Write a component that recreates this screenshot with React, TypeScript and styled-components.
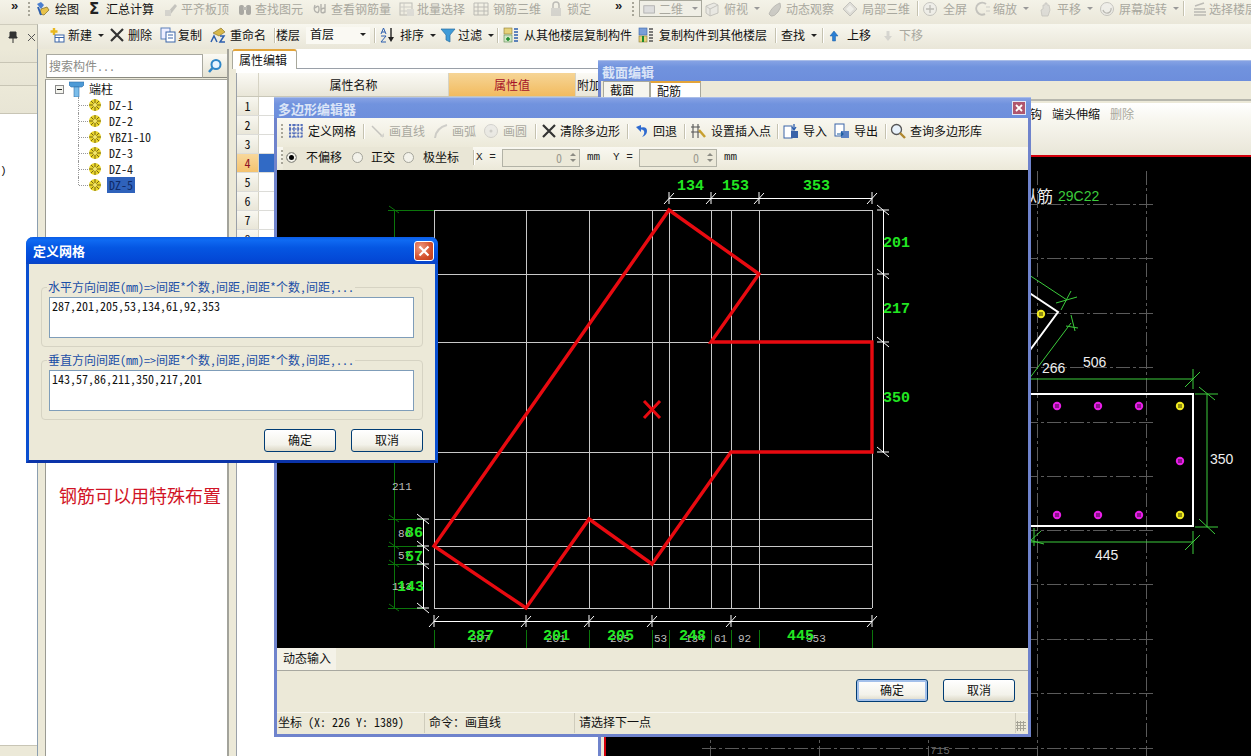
import React from "react";
import styled, { createGlobalStyle } from "styled-components";

const Global = createGlobalStyle`
  html, body { margin: 0; padding: 0; background: #ece9d8; }
  body { font: 12px/14px "Noto Sans CJK SC", "Liberation Sans", sans-serif; font-feature-settings: "hwid"; color: #111; }
  * { box-sizing: border-box; }
`;

const Root = styled.div`
  position: relative; width: 1251px; height: 756px; overflow: hidden;
  display: flex; flex-direction: column; background: #ece9d8;
`;
const TopBar = styled.div`
  flex: 0 0 24px; display: flex; align-items: flex-start; padding-top: 0;
  background: linear-gradient(#f4f3e8, #eae7d9);
`;
const SecondBar = styled.div`
  flex: 0 0 25px; display: flex; align-items: center; padding-bottom: 3px;
  background: linear-gradient(#f8f7ef, #e9e6d8);
`;
const Spacer = styled.div<{ $w: number }>`flex: 0 0 ${p => p.$w}px;`;
const Slot = styled.div<{ $w: number; $h?: number; $dim?: boolean }>`
  flex: 0 0 ${p => p.$w}px; height: ${p => p.$h ?? 17}px; display: flex; align-items: center;
  white-space: nowrap; overflow: hidden; color: ${p => (p.$dim ? "#a9a89f" : "#111")};
`;
const IconBox = styled.span<{ $w: number; $dim?: boolean }>`
  flex: 0 0 ${p => p.$w}px; display: flex; align-items: center; height: 16px;
  ${p => (p.$dim ? "filter: grayscale(1); opacity: .5;" : "")}
`;
const Caret = styled.span<{ $dim?: boolean }>`
  width: 0; height: 0; margin-left: 6px; border: 3px solid transparent; border-bottom: 0;
  border-top: 3px solid ${p => (p.$dim ? "#999" : "#222")};
`;
const Sep = styled.span`width: 1px; height: 15px; background: #c5c2b0; box-shadow: 1px 0 0 #fff;`;
const Grip = styled.span`
  flex: none; width: 2px; height: 14px;
  background: repeating-linear-gradient(#a8a699 0 2px, transparent 2px 4px);
`;
const Chevron = styled.span`font: bold 13px/12px "Liberation Sans", sans-serif; color: #222; margin-bottom: 6px;`;
const SigmaMark = styled.span`font: bold 15px/16px "DejaVu Sans", sans-serif; color: #222;`;
const ViewCombo = styled.div`
  flex: 0 0 60px; height: 17px; margin: 0 5px 0 0; display: flex; align-items: center; gap: 3px;
  padding: 0 3px; border: 1px solid #a8a89c; background: #f0efe6; color: #a9a89f;
`;
const FloorCombo = styled.div`
  flex: 0 0 64px; height: 19px; display: flex; align-items: center; justify-content: space-between;
  padding: 0 4px 2px 4px; background: #faf9f3; margin-right: 4px;
`;
const PinBox = styled.div`
  flex: 0 0 38px; height: 25px; margin-bottom: -3px; display: flex; align-items: center; padding-left: 8px; gap: 9px;
  border-right: 1px solid #b3b3a8; border-top: 1px solid #cfccbd; background: #ece9d8;
`;

const Body = styled.div`flex: 1; display: flex; min-height: 0;`;
const FarLeft = styled.aside`
  flex: 0 0 38px; display: flex; flex-direction: column; border-right: 1px solid #8b9eb0;
`;
const FarBand = styled.div<{ $h: number }>`
  flex: 0 0 ${p => p.$h}px; border-bottom: 1px solid #c8c5b5; background: linear-gradient(#ece9d8, #e8e5d5);
`;
const FarContent = styled.div`
  flex: 1; background: #fff; padding: 50px 0 0 0; font-family: "Liberation Mono", monospace; font-size: 11px;
`;
const FarFoot = styled.div`flex: 0 0 11px; background: #ece9d8; border-top: 1px solid #c8c5b5;`;
const Gutter = styled.div<{ $w: number }>`flex: 0 0 ${p => p.$w}px;`;

const TreePanel = styled.section`
  flex: 0 0 184px; display: flex; flex-direction: column; padding-top: 5px; border-right: 2px solid #a3a39b;
`;
const SearchRow = styled.div`
  flex: 0 0 24px; display: flex; margin-left: 1px; margin-right: 0;
`;
const SearchField = styled.div`
  flex: 0 0 157px; border: 1px solid #a9a9a0; border-bottom-color: #8a8a80; background: #fff;
  color: #8b8b86; padding: 3px 2px; line-height: 15px;
`;
const SearchBtn = styled.div`
  flex: 1; display: flex; align-items: center; justify-content: center;
  background: linear-gradient(#fbfaf4, #e6e3d3); border-bottom: 1px solid #8a8a80;
`;
const TreeBox = styled.div`
  flex: 1; margin-top: 1px; background: #fff; border-left: 1px solid #9a9a92; border-top: 1px solid #a5a59c; padding-top: 1px;
`;
const RootRow = styled.div`display: flex; align-items: center; height: 16px; padding-left: 9px;`;
const MinusBox = styled.span`
  width: 9px; height: 9px; border: 1px solid #8b8b8b; margin-right: 5px; position: relative; background: #f4f4ee;
  &::after { content: ""; position: absolute; left: 1px; right: 1px; top: 3px; height: 1px; background: #222; }
`;
const ChildRow = styled.div`display: flex; align-items: center; height: 16px; padding-left: 32px;`;
const Branch = styled.span<{ $last?: boolean }>`
  position: relative; width: 10px; height: 16px; flex: none;
  border-left: 1px dotted #999; ${p => (p.$last ? "height: 8px; align-self: flex-start;" : "")}
  &::after { content: ""; position: absolute; left: 0; right: 0; top: 8px; border-top: 1px dotted #999; }
`;
const NodeLabel = styled.span<{ $selected?: boolean }>`
  margin-left: 5px; padding: 0 2px; height: 16px; line-height: 16px;
  background: ${p => (p.$selected ? "#2f62bb" : "transparent")};
  color: ${p => (p.$selected ? "#0f2a68" : "#222")};
`;
const RedNote = styled.div`
  margin: 290px 0 0 13px; font-size: 18px; line-height: 24px; color: #d11426; white-space: nowrap;
`;

const PropPanel = styled.section`flex: 1; display: flex; flex-direction: column; min-width: 0; background: #fff;`;
const TabStrip = styled.div`flex: 0 0 20px; display: flex; border-bottom: 1px solid #9aa0a8; background: #fff; margin-top: 0;`;
const PropTab = styled.div`
  width: 65px; height: 20px; padding: 2px 0 0 6px; background: #fff; border: 1px solid #a8a89c;
  border-top: 2px solid #e3a43a; border-bottom: 0; border-radius: 3px 3px 0 0; margin-bottom: -1px;
`;
const GridWrap = styled.div`flex: 1; padding: 4px 0 0 4px; background: linear-gradient(90deg, #ece9d8 0 4px, #fff 4px); `;
const Grid = styled.div`border-left: 1px solid #9aa0a8; height: 100%; background: #fff;`;
const GridHead = styled.div`display: flex; height: 24px; border-bottom: 1px solid #c9c7b8;`;
const HeadCell = styled.div<{ $w: number; $on?: boolean; $start?: boolean }>`
  flex: 0 0 ${p => p.$w}px; display: flex; align-items: center; justify-content: ${p => (p.$start ? "flex-start" : "center")};
  padding-left: ${p => (p.$start ? 1 : 0)}px;
  border-right: 1px solid #d6d3c4; white-space: nowrap; overflow: hidden;
  background: ${p => (p.$on ? "linear-gradient(#f6d596, #f2bb5f)" : "linear-gradient(#fbfaf5, #e9e6d8)")};
  color: ${p => (p.$on ? "#a5122a" : "#111")};
`;
const GridRow = styled.div`display: flex; height: 19px; border-bottom: 1px solid #dcdcd8;`;
const RowNo = styled.div<{ $on?: boolean }>`
  flex: 0 0 22px; text-align: center; line-height: 18px;
  background: ${p => (p.$on ? "linear-gradient(#f8d89c, #f4c36f)" : "linear-gradient(#f8f7f0, #e9e6d8)")};
  color: ${p => (p.$on ? "#8e1025" : "#111")}; border-right: 1px solid #d6d3c4;
`;
const RowCell = styled.div<{ $on?: boolean }>`flex: 1; background: ${p => (p.$on ? "#316ac5" : "#fff")};`;

const Win = styled.div<{ $l: number; $t: number; $w: number; $h: number }>`
  position: absolute; left: ${p => p.$l}px; top: ${p => p.$t}px; width: ${p => p.$w}px; height: ${p => p.$h}px;
  display: flex; flex-direction: column; background: #ece9d8; border: 3px solid #6f83cc; border-top: 0;
`;
const WinTitle = styled.div`
  flex: 0 0 21px; display: flex; align-items: center; justify-content: space-between;
  margin: 0 -3px; padding: 1px 5px 0 4px;
  background: linear-gradient(#86a2e4, #7193de 30%, #6d8edc); border-top: 1px solid #a9bde8;
  color: #dbe5f7; font-weight: 700; font-size: 13px;
`;
const SmallClose = styled.span`
  width: 14px; height: 14px; display: flex; align-items: center; justify-content: center;
  background: #b0566e; border: 1px solid #e4e8f6; color: #fff; margin-top: -1px;
`;
const SectionTabs = styled.div`flex: 0 0 19px; display: flex; align-items: flex-end; padding-left: 2px; border-bottom: 2px solid #b7b7ad;`;
const SecTab = styled.div<{ $w: number; $on?: boolean }>`
  width: ${p => p.$w}px; height: 18px; padding: 1px 0 0 6px; background: ${p => (p.$on ? "#fff" : "#f6f5ee")};
  border: 1px solid #a8a89c; border-bottom: 0;
  ${p => (p.$on ? "border-top: 2px solid #e3a43a;" : "")}
`;
const SecTools = styled.div`
  flex: 0 0 52px; display: flex; gap: 10px; padding: 4px 0 0 417px; margin-top: 2px; white-space: nowrap;
  background: linear-gradient(#fff 0, #f8f7f0 30%, #e9e6d8);
`;
const MutedTool = styled.span`color: #aaa99f;`;
const RedRule = styled.div`flex: 0 0 2px; background: #d4000c;`;
const SectionCanvas = styled.div`flex: 1; margin-left: 3px; border-left: 2px solid #d4000c; background: #000; min-height: 0;`;
const DrawSvg = styled.svg`display: block;`;

const PolyRow = styled.div<{ $h: number }>`
  flex: 0 0 ${p => p.$h}px; display: flex; align-items: center; padding-bottom: 3px;
  background: linear-gradient(#f9f8f1, #ece9d9);
`;
const ModeGroup = styled.div`
  display: flex; align-items: center; align-self: stretch; background: #e9e6d6; flex: 0 0 190px; padding-left: 3px; margin-bottom: -3px; padding-bottom: 3px;
`;
const Radio = styled.span<{ $on?: boolean }>`
  flex: none; width: 11px; height: 11px; border-radius: 50%; border: 1px solid #a4a49a; background: ${p => (p.$on ? "#000" : "#f3f2ea")};
  ${p => (p.$on ? "box-shadow: inset 0 0 0 2px #f5f4ec;" : "")}
`;
const ModeLabel = styled.span<{ $ml: number; $mr: number }>`margin: 0 ${p => p.$mr}px 0 ${p => p.$ml}px; white-space: nowrap;`;
const MonoLabel = styled.span<{ $w: number }>`
  flex: 0 0 ${p => p.$w}px; white-space: pre; font: 11px/14px "Liberation Mono", monospace; color: #222;
`;
const SpinBox = styled.div`
  flex: 0 0 78px; height: 18px; display: flex; align-items: center; justify-content: flex-end; gap: 6px; padding-right: 2px;
  border: 1px solid #b2b2a6; background: #ece9d9; color: #9c9b90; margin-bottom: -1px;
`;
const SpinArrows = styled.span`
  display: flex; flex-direction: column; gap: 3px; width: 9px; align-items: center;
  &::before, &::after { content: ""; width: 0; height: 0; border: 3px solid transparent; }
  &::before { border-top: 0; border-bottom: 3px solid #8c8c84; }
  &::after { border-bottom: 0; border-top: 3px solid #8c8c84; }
`;
const PolyCanvas = styled.div`flex: 0 0 478px; background: #000;`;
const DynTabs = styled.div`flex: 0 0 23px; display: flex; border-bottom: 1px solid #a8a8a0; margin-bottom: 0;`;
const DynTab = styled.div`width: 59px; padding: 3px 0 0 6px; background: #f4f2e8;`;
const BtnRow = styled.div`flex: 0 0 41px; display: flex; justify-content: flex-end; gap: 15px; padding: 8px 13px 0 0;`;
const XpButton = styled.button<{ $focus?: boolean }>`
  width: 72px; height: 23px; padding: 0 0 1px; font: inherit; color: #111; border: 1px solid #003c74; border-radius: 3px;
  background: linear-gradient(#fff, #f3f2ea 70%, #dcd8c6);
  ${p => (p.$focus ? "box-shadow: inset 0 0 0 2px #a3c0ea;" : "")}
`;
const StatusBar = styled.div`flex: 0 0 21px; display: flex; align-items: center; border-top: 1px solid #f8f7f0; white-space: pre;`;
const StatusCell = styled.div<{ $w?: number; $pl: number }>`
  ${p => (p.$w ? `flex: 0 0 ${p.$w}px;` : "flex: 1;")} height: 100%; padding: 2px 0 0 ${p => p.$pl}px; border-right: 1px solid #cfccbc;
`;
const ResizeGrip = styled.span`
  flex: 0 0 10px; height: 10px; align-self: flex-end; margin: 0 2px 2px 0;
  background: radial-gradient(#a5a396 1px, transparent 1.2px) 0 0 / 3px 3px;
`;

const Dialog = styled.div`
  position: absolute; left: 26px; top: 237px; width: 412px; height: 226px; display: flex; flex-direction: column;
  background: #ece9d8; border: 3px solid #0a4fd0; border-top: 0; border-bottom-color: #0a33a8; border-radius: 7px 7px 0 0;
`;
const DlgTitle = styled.div`
  flex: 0 0 27px; margin: 0 -3px; padding: 0 4px 0 7px; display: flex; align-items: center; justify-content: space-between;
  border-radius: 7px 7px 0 0; color: #fff; font-weight: 700; font-size: 13px;
  background: linear-gradient(#0a5ce6, #0f6af2 12%, #0556e2 40%, #0348d6 85%, #0a44c4);
`;
const DlgClose = styled.span`
  width: 20px; height: 20px; display: flex; align-items: center; justify-content: center;
  background: radial-gradient(circle at 30% 30%, #ee9a80, #d4502c 60%, #bd3c1a); border: 1px solid #fff; border-radius: 3px;
`;
const DlgBody = styled.div`flex: 1; padding: 15px 12px 0 12px; display: flex; flex-direction: column;`;
const Group = styled.fieldset`
  margin: 0 0 5px; padding: 0 8px 8px 7px; border: 1px solid #d6d3c3; border-radius: 4px; min-width: 0;
`;
const GroupLegend = styled.legend`
  padding: 0 1px; margin-left: -2px; height: 16px; line-height: 16px; color: #1b4ea6; white-space: nowrap;
`;
const GridInput = styled.textarea`
  display: block; width: 100%; height: 41px; margin-top: 2px; padding: 1px 2px; resize: none; outline: 0; overflow: hidden;
  border: 1px solid #7f9db9; background: #fff; font: inherit; font-feature-settings: "hwid"; color: #111;
`;
const DlgButtons = styled.div`display: flex; justify-content: flex-end; gap: 15px; margin-top: 4px;`;

const GreenNum = styled.text`fill: #22e622; font: bold 15px "Liberation Mono", monospace;`;
const GreyNum = styled.text`fill: #bdbdbd; font: 11px "Liberation Mono", monospace;`;
const WhiteNum = styled.text`fill: #eee; font: 14px "Liberation Sans", sans-serif;`;
const GreenCode = styled.text`fill: #3ccc3c; font: 14px "Liberation Sans", sans-serif;`;
const WhiteCjk = styled.text`fill: #eee; font: 16px "Noto Sans CJK SC", sans-serif;`;
const GreyTick = styled.text`fill: #666; font: 11px "Liberation Mono", monospace;`;

type IconName = string;
const Ic = ({ n }: { n: IconName }) => {
  const s = (c: React.ReactNode, w = 16) => <svg width={w} height={16} viewBox="0 0 16 16">{c}</svg>;
  switch (n) {
    case "draw": return s(<><path d="M2 3l4-2 3 3-3 4z" fill="#4a7fd0" /><path d="M6 8l6-2 2 3-5 5-4-1z" fill="#e8c24a" stroke="#7a6a2a" strokeWidth=".7" /><path d="M3 6l3 8" stroke="#2d5fae" strokeWidth="2" /></>);
    case "align": return s(<><path d="M3 13L12 3l2 2-7 9z" fill="#999" /><rect x="2" y="9" width="6" height="6" fill="#bbb" /></>);
    case "binoc": return s(<><rect x="2" y="4" width="5" height="10" rx="2" fill="#666" /><rect x="9" y="4" width="5" height="10" rx="2" fill="#666" /><rect x="6" y="6" width="4" height="3" fill="#888" /></>);
    case "qty": return s(<path d="M3 4q-2 5 1 7t3-3-4-1M9 3v7M13 7q-4 0-4 3t4 1V3" fill="none" stroke="#777" strokeWidth="1.4" />);
    case "batch": return s(<><rect x="1" y="2" width="12" height="12" fill="none" stroke="#888" /><path d="M1 6h12M1 10h12M5 2v12" stroke="#aaa" /><rect x="8" y="8" width="7" height="7" fill="#ccc" /></>);
    case "r3d": return s(<><path d="M1 2h14v12H1zM5 2v12M11 2v12M1 6h14M1 10h14" fill="none" stroke="#888" /></>);
    case "lock": return s(<><rect x="3" y="7" width="10" height="8" fill="#bbb" /><path d="M5 7V4a3 3 0 016 0v3" fill="none" stroke="#888" strokeWidth="1.5" /></>);
    case "flat": return s(<><rect x="1" y="4" width="13" height="9" fill="#ddd" stroke="#aaa" /></>, 13);
    case "cube": return s(<><path d="M2 5l8-3 4 2v8l-8 3-4-3z" fill="#e4e4dc" stroke="#999" /><path d="M2 5l4 3 8-4M6 8v7" fill="none" stroke="#999" /></>);
    case "orbit": return s(<path d="M2 13Q5 5 13 2q2 4-2 9t-7 4z" fill="#aaa" stroke="#888" />);
    case "part": return s(<><path d="M8 1l7 7-7 7-7-7z" fill="#ccc" stroke="#999" /><path d="M4 8l4-4 4 4-4 4z" fill="#eee" /></>);
    case "fit": return s(<><circle cx="8" cy="8" r="6.5" fill="#eee" stroke="#999" /><path d="M8 4v8M4 8h8" stroke="#888" strokeWidth="1.3" /></>);
    case "zoomc": return s(<><path d="M11 3a6 6 0 10-1 10" fill="none" stroke="#999" strokeWidth="2" /><path d="M11 6h4M11 10h4" stroke="#aaa" /></>);
    case "pan": return s(<path d="M4 15l-1-6 2-1V4h2V2h2v2h2l1 5-2 6z" fill="#ccc" stroke="#999" strokeWidth=".8" />);
    case "rot": return s(<><circle cx="8" cy="8" r="6.5" fill="#eee" stroke="#999" /><path d="M4 9a4 4 0 108-2" fill="none" stroke="#888" strokeWidth="1.3" /></>);
    case "floor": return s(<path d="M3 5l9-3M2 8h11M2 11h12M2 14h12" stroke="#888" strokeWidth="1.5" />);
    case "new": return s(<><path d="M5 1v7M1.5 4.5h7" stroke="#e8b820" strokeWidth="2.4" /><rect x="6" y="8" width="9" height="7" fill="#fff" stroke="#3a64a8" /><path d="M6 10.5h9M10 10v5" stroke="#3a64a8" /></>);
    case "x": return s(<path d="M2 2l12 12M14 2L2 14" stroke="#333" strokeWidth="2.2" />);
    case "copy": return s(<><rect x="1" y="1" width="9" height="11" fill="#eef" stroke="#5a7fb8" /><rect x="6" y="5" width="9" height="10" fill="#fff" stroke="#3a64a8" /><path d="M8 8h5M8 11h5" stroke="#3a64a8" /></>);
    case "rename": return s(<><path d="M3 6L11 1l4 4-6 4z" fill="#d8b84a" stroke="#806a20" strokeWidth=".6" /><path d="M1 15l3-6 3 6M10 9h4l-4 6h5" fill="none" stroke="#2d5fae" strokeWidth="1.5" /></>);
    case "sort": return s(<><path d="M1 7l2.5-6L6 7M1.8 5h3.4M1 9h5l-5 6h5" fill="none" stroke="#2d5fae" strokeWidth="1" /><path d="M11 1v12" stroke="#222" strokeWidth="1.4" /><path d="M8 10l3 5 3-5z" fill="#222" /></>);
    case "funnel": return s(<path d="M1 2h14l-5 6v7l-4-2V8z" fill="#3f9bd8" stroke="#2a6ea0" strokeWidth=".7" />);
    case "from": return s(<><rect x="1" y="1" width="8" height="6" fill="#e6d27a" stroke="#8a7a30" strokeWidth=".6" /><rect x="1" y="8" width="8" height="7" fill="#cfe4c4" stroke="#5a8a50" strokeWidth=".6" /><path d="M5 10v4M3 12h4" stroke="#1c8a2a" strokeWidth="1.5" /><path d="M11 2h4M11 5h4M11 8h4M11 11h4M11 14h4" stroke="#2d5fae" strokeWidth="1.5" /></>);
    case "to": return s(<><rect x="1" y="1" width="8" height="7" fill="#7a9ed8" stroke="#3a64a8" strokeWidth=".6" /><rect x="1" y="9" width="8" height="6" fill="#e6d27a" stroke="#8a7a30" strokeWidth=".6" /><path d="M5 9v6" stroke="#1c8a2a" strokeWidth="2" /><path d="M11 2h4M11 5h4M11 8h4M11 11h4M11 14h4" stroke="#555" strokeWidth="1.5" /></>);
    case "up": return s(<path d="M8 4l4 5h-2.5v5h-3V9H4z" fill="#2a7fd4" stroke="#1c5ea0" strokeWidth=".5" />);
    case "down": return s(<path d="M8 14l4-5h-2.5V4h-3v5H4z" fill="#bbb" />);
    case "grid": return s(<path d="M1 2h14M1 6h14M1 10h14M1 14h14M2 1v14M6 1v14M10 1v14M14 1v14" stroke="#2d4fb0" strokeWidth="1.2" strokeDasharray="2 .8" />);
    case "line": return s(<><path d="M2 3l11 11" stroke="#999" strokeWidth="1.5" /><path d="M10 14l4 0 0-4z" fill="#bbb" /></>);
    case "arc": return s(<path d="M2 15Q3 5 14 2" fill="none" stroke="#aaa" strokeWidth="2" />);
    case "circle": return s(<><circle cx="8" cy="8" r="6.5" fill="#e4e3da" stroke="#b0b0a6" /><circle cx="8" cy="8" r="1.5" fill="#aaa" /></>);
    case "undo": return s(<path d="M2 4l5-2v2.5Q13 3 13 8q0 4-5 6 3-3 2-6-1-2-3-1.5V9z" fill="#2f6bd0" />);
    case "insert": return s(<><path d="M1 4h9M1 9h9M3 1v14M8 1v14" stroke="#555" strokeWidth="1.1" /><path d="M9 7l6 7" stroke="#c8a030" strokeWidth="2.5" /></>);
    case "import": return s(<><rect x="1" y="3" width="8" height="12" fill="#fff" stroke="#3a64a8" /><rect x="8" y="8" width="7" height="7" fill="#3a64a8" /><path d="M11 1v5M9 4l2 3 2-3" fill="none" stroke="#2d5fae" strokeWidth="1.3" /></>);
    case "export": return s(<><rect x="1" y="1" width="9" height="12" fill="#fff" stroke="#3a64a8" /><rect x="7" y="8" width="8" height="7" fill="#5a82c4" /><path d="M3 11h6M7 9l2 2-2 2" fill="none" stroke="#1c5ea0" strokeWidth="1.2" /></>);
    case "mag": return s(<><circle cx="6.5" cy="6.5" r="5" fill="#e8f2fb" stroke="#555" strokeWidth="1.3" /><path d="M10 10l5 5" stroke="#b08830" strokeWidth="2.4" /></>);
    case "search": return s(<><circle cx="9" cy="6.5" r="4.5" fill="#e9f4ff" stroke="#2f86c8" strokeWidth="2" /><path d="M5.5 10L2 14" stroke="#2f86c8" strokeWidth="2.5" /></>);
    case "gear": return <svg width="14" height="14" viewBox="0 0 14 14"><circle cx="7" cy="7" r="6" fill="#e8d42a" /><path d="M7 1v12M1 7h12M3 3l8 8M11 3l-8 8" stroke="#6a5a10" strokeWidth=".9" /><circle cx="7" cy="7" r="2" fill="#f2e66a" /></svg>;
    case "T": return <svg width="15" height="16" viewBox="0 0 15 16"><path d="M0 1h15v3l-2 2H2L0 4z" fill="#4d9ad6" stroke="#2f6ea8" strokeWidth=".6" /><path d="M5 6h5v10H5z" fill="#7bbdea" stroke="#2f6ea8" strokeWidth=".6" /></svg>;
    case "pin": return <svg width="10" height="12" viewBox="0 0 10 12"><path d="M2 1h6v5h1v1H1V6h1zM5 7v5" fill="#333" stroke="#333" /></svg>;
    case "thinx": return <svg width="9" height="9" viewBox="0 0 9 9"><path d="M1 1l7 7M8 1L1 8" stroke="#555" /></svg>;
    case "smallx": return <svg width="8" height="8" viewBox="0 0 8 8"><path d="M1 1l6 6M7 1L1 7" stroke="#fff" strokeWidth="1.8" /></svg>;
    case "bigx": return <svg width="12" height="12" viewBox="0 0 12 12"><path d="M1.5 1.5l9 9M10.5 1.5l-9 9" stroke="#fff" strokeWidth="2.2" /></svg>;
    default: return null;
  }
};

type Item = { x: number; icon?: string; label?: string; iw?: number; caret?: boolean; dim?: boolean; sep?: boolean; grip?: boolean; chev?: boolean; sigma?: boolean; combo?: string; floor?: boolean };

const ToolRun = ({ items, from, to, h }: { items: Item[]; from: number; to: number; h?: number }) => (
  <>
    <Spacer $w={items[0].x - from} />
    {items.map((it, i) => {
      const w = (items[i + 1]?.x ?? to) - it.x;
      return (
        <Slot key={it.x} $w={w} $h={h} $dim={it.dim}>
          {it.sep && <Sep />}
          {it.grip && <Grip />}
          {it.chev && <Chevron>»</Chevron>}
          {it.combo && (
            <ViewCombo><Ic n="flat" />{it.combo}<Caret $dim /></ViewCombo>
          )}
          {it.floor && (<FloorCombo>首层<Caret /></FloorCombo>)}
          {it.sigma && <IconBox $w={it.iw ?? 17}><SigmaMark>Σ</SigmaMark></IconBox>}
          {it.icon && <IconBox $w={it.iw ?? 18} $dim={it.dim}><Ic n={it.icon} /></IconBox>}
          {it.label && <span>{it.label}</span>}
          {it.caret && <Caret $dim={it.dim} />}
        </Slot>
      );
    })}
  </>
);

const topItems: Item[] = [
  { x: 11, chev: true }, { x: 28, grip: true },
  { x: 35, icon: "draw", label: "绘图", iw: 20 },
  { x: 89, sigma: true, label: "汇总计算", iw: 17 },
  { x: 163, icon: "align", label: "平齐板顶", iw: 18, dim: true },
  { x: 237, icon: "binoc", label: "查找图元", iw: 18, dim: true },
  { x: 312, icon: "qty", label: "查看钢筋量", iw: 19, dim: true },
  { x: 399, icon: "batch", label: "批量选择", iw: 18, dim: true },
  { x: 473, icon: "r3d", label: "钢筋三维", iw: 20, dim: true },
  { x: 548, icon: "lock", label: "锁定", iw: 19, dim: true },
  { x: 615, chev: true }, { x: 632, grip: true },
  { x: 639, combo: "二维" },
  { x: 704, icon: "cube", label: "俯视", iw: 20, dim: true, caret: true },
  { x: 767, icon: "orbit", label: "动态观察", iw: 19, dim: true },
  { x: 842, icon: "part", label: "局部三维", iw: 20, dim: true },
  { x: 917, sep: true },
  { x: 922, icon: "fit", label: "全屏", iw: 21, dim: true },
  { x: 975, icon: "zoomc", label: "缩放", iw: 18, dim: true, caret: true },
  { x: 1038, icon: "pan", label: "平移", iw: 19, dim: true, caret: true },
  { x: 1099, icon: "rot", label: "屏幕旋转", iw: 20, dim: true, caret: true },
  { x: 1183, sep: true },
  { x: 1192, icon: "floor", label: "选择楼层", iw: 17, dim: true },
];
const secondItems: Item[] = [
  { x: 49, icon: "new", label: "新建", iw: 19, caret: true },
  { x: 109, icon: "x", label: "删除", iw: 19 },
  { x: 160, icon: "copy", label: "复制", iw: 18 },
  { x: 210, icon: "rename", label: "重命名", iw: 20 },
  { x: 274, sep: true },
  { x: 276, label: "楼层" },
  { x: 306, floor: true },
  { x: 374, sep: true },
  { x: 380, icon: "sort", label: "排序", iw: 20, caret: true },
  { x: 440, icon: "funnel", label: "过滤", iw: 18, caret: true },
  { x: 497, sep: true },
  { x: 503, icon: "from", label: "从其他楼层复制构件", iw: 21 },
  { x: 638, icon: "to", label: "复制构件到其他楼层", iw: 21 },
  { x: 775, sep: true },
  { x: 781, label: "查找", caret: true },
  { x: 822, sep: true },
  { x: 826, icon: "up", label: "上移", iw: 21 },
  { x: 880, icon: "down", label: "下移", iw: 19, dim: true },
];
const polyItems: Item[] = [
  { x: 281, grip: true },
  { x: 288, icon: "grid", label: "定义网格", iw: 20 },
  { x: 363, sep: true },
  { x: 370, icon: "line", label: "画直线", iw: 19, dim: true },
  { x: 433, icon: "arc", label: "画弧", iw: 19, dim: true },
  { x: 483, icon: "circle", label: "画圆", iw: 20, dim: true },
  { x: 535, sep: true },
  { x: 541, icon: "x", label: "清除多边形", iw: 19 },
  { x: 627, sep: true },
  { x: 634, icon: "undo", label: "回退", iw: 19 },
  { x: 684, sep: true },
  { x: 690, icon: "insert", label: "设置插入点", iw: 21 },
  { x: 777, sep: true },
  { x: 783, icon: "import", label: "导入", iw: 20 },
  { x: 834, icon: "export", label: "导出", iw: 20 },
  { x: 885, sep: true },
  { x: 890, icon: "mag", label: "查询多边形库", iw: 20 },
];

const gx = [434, 526, 589, 652, 669, 711, 731, 759, 872];
const gy = [210, 274, 342, 452, 519, 546, 564, 608];
const VTick = ({ x, y }: { x: number; y: number }) => <path d={`M${x - 5} ${y + 6}L${x + 5} ${y - 5}M${x} ${y - 6}V${y + 6}`} />;
const HTick = ({ x, y }: { x: number; y: number }) => <path d={`M${x - 6} ${y - 5}L${x + 6} ${y + 5}M${x - 6} ${y}H${x + 6}`} />;

const PolygonDrawing = () => (
  <DrawSvg width={751} height={478} viewBox="277 170 751 478">
    <g stroke="#0b760b" fill="none" shapeRendering="crispEdges">
      <path d="M394 210V608M388 210H434" />
      {[519, 546, 564, 608].map(y => <path key={y} d={`M388 ${y}H423`} />)}
      {gx.map(x => <path key={x} d={`M${x} 630V648`} />)}
    </g>
    <g stroke="#0b760b" fill="none">
      {[210, 519, 546, 564, 608].map(y => <path key={y} d={`M389 ${y - 4}L399 ${y + 3}`} />)}
    </g>
    <g stroke="#c8c8c8" shapeRendering="crispEdges">
      {gx.map(x => <path key={x} d={`M${x} 210V608`} />)}
      {gy.map(y => <path key={y} d={`M434 ${y}H872`} />)}
    </g>
    <g stroke="#fff" fill="none">
      <path d="M669 198H872" shapeRendering="crispEdges" />
      {[669, 711, 759, 872].map(x => <VTick key={x} x={x} y={198} />)}
      <path d="M883 210V452" shapeRendering="crispEdges" />
      {[210, 274, 342, 452].map(y => <HTick key={y} x={883} y={y} />)}
      <path d="M423 519V608" shapeRendering="crispEdges" />
      {[519, 546, 564, 608].map(y => <HTick key={y} x={423} y={y} />)}
      <path d="M434 621H872" shapeRendering="crispEdges" />
      {[434, 526, 589, 652, 731, 872].map(x => <VTick key={x} x={x} y={621} />)}
    </g>
    <polygon points="669,210 759,274 711,342 872,342 872,452 731,452 652,564 589,519 526,608 434,546" fill="none" stroke="#e80a10" strokeWidth="3.4" strokeLinejoin="miter" />
    <path d="M644 401L660 418M660 401L644 418" stroke="#e80a10" strokeWidth="3" />
    {[["211", 392, 490], ["86", 398, 537], ["57", 398, 559], ["143", 392, 590], ["287", 470, 642], ["201", 546, 642], ["205", 610, 642], ["53", 654, 642], ["134", 685, 642], ["61", 714, 642], ["92", 738, 642], ["353", 806, 642]].map(([t, x, y]) => (
      <GreyNum key={`${t}${x}`} x={x as number} y={y as number}>{t}</GreyNum>
    ))}
    {[["134", 677, 190], ["153", 722, 190], ["353", 803, 190], ["201", 883, 247], ["217", 883, 313], ["350", 883, 402], ["86", 405, 537], ["57", 405, 561], ["143", 397, 591], ["287", 467, 640], ["201", 543, 640], ["205", 607, 640], ["248", 679, 640], ["445", 787, 640]].map(([t, x, y]) => (
      <GreenNum key={`${t}${x}`} x={x as number} y={y as number}>{t}</GreenNum>
    ))}
  </DrawSvg>
);

const Rebar = ({ x, y, c }: { x: number; y: number; c: string }) => (
  <g>
    <circle cx={x} cy={y} r={4.2} fill={c} />
    <path d={`M${x - 2} ${y - 1}h4M${x - 2} ${y + 1}h4`} stroke="#000" strokeWidth=".8" />
  </g>
);

const SectionDrawing = () => (
  <DrawSvg width={643} height={602} viewBox="608 154 643 602">
    <g stroke="#5a5a5a" fill="none" strokeDasharray="14 3 3 3">
      {[712, 821, 930, 1039, 1148].map(x => <path key={x} d={`M${x} 168V756`} shapeRendering="crispEdges" />)}
      {[201, 255, 310, 364, 419, 473, 527, 581, 636, 690, 745].map(y => <path key={y} d={`M704 ${y}H1156`} shapeRendering="crispEdges" />)}
    </g>
    <WhiteCjk x={1055} y={199} textAnchor="end">纵筋</WhiteCjk>
    <GreenCode x={1060} y={198}>29C22</GreenCode>
    <GreyTick x={932} y={751}>715</GreyTick>
    <g stroke="#fff" strokeWidth="2" fill="none">
      <path d="M1024 285L1060 309L1024 358" />
      <path d="M1025 391H1195V523H1025" />
    </g>
    <g stroke="#3ccc3c" fill="none">
      <path d="M1025 268L1069 297M1058 300L1079 294M1073 288L1063 307" />
      <path d="M1025 384L1073 320M1068 323L1080 325M1073 312L1077 328" />
      <path d="M1025 376H1195M1187 384L1202 369M1195 366V386" />
      <path d="M1197 391H1220M1209 391V524M1201 384L1217 397M1197 524H1220M1201 516L1217 531" />
      <path d="M1025 539H1195M1187 547L1202 532M1195 528V551M1036 525V543M1031 539L1043 528M1031 537L1046 541" />
    </g>
    <WhiteNum x={1044} y={370}>266</WhiteNum>
    <WhiteNum x={1085} y={364}>506</WhiteNum>
    <WhiteNum x={1212} y={461}>350</WhiteNum>
    <WhiteNum x={1097} y={557}>445</WhiteNum>
    <Rebar x={1043} y={311} c="#f0ea20" />
    {[1059, 1100, 1141].map(x => <Rebar key={x} x={x} y={403} c="#e81ee8" />)}
    {[1059, 1100, 1141].map(x => <Rebar key={x} x={x} y={512} c="#e81ee8" />)}
    <Rebar x={1182} y={458} c="#e81ee8" />
    <Rebar x={1182} y={403} c="#f0ea20" />
    <Rebar x={1182} y={512} c="#f0ea20" />
  </DrawSvg>
);

const treeNodes = ["DZ-1", "DZ-2", "YBZ1-10", "DZ-3", "DZ-4", "DZ-5"];

export default function App() {
  return (
    <Root>
      <Global />
      <TopBar><ToolRun items={topItems} from={0} to={1251} /></TopBar>
      <SecondBar>
        <PinBox><Ic n="pin" /><Ic n="thinx" /></PinBox>
        <ToolRun items={secondItems} from={38} to={1251} />
      </SecondBar>
      <Body>
        <FarLeft>
          <FarBand $h={14} />
          <FarBand $h={23} />
          <FarBand $h={28} />
          <FarContent>)</FarContent>
          <FarFoot />
        </FarLeft>
        <Gutter $w={7} />
        <TreePanel>
          <SearchRow>
            <SearchField>搜索构件...</SearchField>
            <SearchBtn><Ic n="search" /></SearchBtn>
          </SearchRow>
          <TreeBox>
            <RootRow>
              <MinusBox />
              <IconBox $w={20}><Ic n="T" /></IconBox>
              <span>端柱</span>
            </RootRow>
            {treeNodes.map((t, i) => (
              <ChildRow key={t}>
                <Branch $last={i === treeNodes.length - 1} />
                <Ic n="gear" />
                <NodeLabel $selected={t === "DZ-5"}>{t}</NodeLabel>
              </ChildRow>
            ))}
            <RedNote>钢筋可以用特殊布置</RedNote>
          </TreeBox>
        </TreePanel>
        <Gutter $w={3} />
        <PropPanel>
          <TabStrip><PropTab>属性编辑</PropTab></TabStrip>
          <GridWrap>
            <Grid>
              <GridHead>
                <HeadCell $w={22} />
                <HeadCell $w={190}>属性名称</HeadCell>
                <HeadCell $w={127} $on>属性值</HeadCell>
                <HeadCell $w={60} $start>附加</HeadCell>
              </GridHead>
              {[1, 2, 3, 4, 5, 6, 7, 8].map(n => (
                <GridRow key={n}>
                  <RowNo $on={n === 4}>{n}</RowNo>
                  <RowCell $on={n === 4} />
                </GridRow>
              ))}
            </Grid>
          </GridWrap>
        </PropPanel>
      </Body>

      <Win $l={598} $t={60} $w={656} $h={700}>
        <WinTitle>截面编辑</WinTitle>
        <SectionTabs>
          <SecTab $w={47}>截面</SecTab>
          <SecTab $w={51} $on>配筋</SecTab>
        </SectionTabs>
        <SecTools>
          <span>弯钩</span><span>端头伸缩</span><MutedTool>删除</MutedTool>
        </SecTools>
        <RedRule />
        <SectionCanvas><SectionDrawing /></SectionCanvas>
      </Win>

      <Win $l={274} $t={97} $w={757} $h={640}>
        <WinTitle>多边形编辑器<SmallClose><Ic n="smallx" /></SmallClose></WinTitle>
        <PolyRow $h={29}><ToolRun items={polyItems} from={277} to={1028} h={18} /></PolyRow>
        <PolyRow $h={23}>
          <Spacer $w={4} />
          <Grip />
          <ModeGroup>
            <Radio $on />
            <ModeLabel $ml={9} $mr={10}>不偏移</ModeLabel>
            <Radio />
            <ModeLabel $ml={8} $mr={8}>正交</ModeLabel>
            <Radio />
            <ModeLabel $ml={9} $mr={0}>极坐标</ModeLabel>
          </ModeGroup>
          <Sep />
          <Spacer $w={2} />
          <MonoLabel $w={26}>X =</MonoLabel>
          <SpinBox>0<SpinArrows /></SpinBox>
          <Spacer $w={7} />
          <MonoLabel $w={26}>mm</MonoLabel>
          <MonoLabel $w={26}>Y =</MonoLabel>
          <SpinBox>0<SpinArrows /></SpinBox>
          <Spacer $w={7} />
          <MonoLabel $w={20}>mm</MonoLabel>
        </PolyRow>
        <PolyCanvas><PolygonDrawing /></PolyCanvas>
        <DynTabs><DynTab>动态输入</DynTab></DynTabs>
        <BtnRow>
          <XpButton $focus>确定</XpButton>
          <XpButton>取消</XpButton>
        </BtnRow>
        <StatusBar>
          <StatusCell $w={148} $pl={1}>坐标 (X: 226 Y: 1389)</StatusCell>
          <StatusCell $w={150} $pl={4}>命令：画直线</StatusCell>
          <StatusCell $pl={4}>请选择下一点</StatusCell>
          <ResizeGrip />
        </StatusBar>
      </Win>

      <Dialog>
        <DlgTitle>定义网格<DlgClose><Ic n="bigx" /></DlgClose></DlgTitle>
        <DlgBody>
          <Group>
            <GroupLegend>{"水平方向间距(mm)=>间距*个数,间距,间距*个数,间距,..."}</GroupLegend>
            <GridInput readOnly defaultValue="287,201,205,53,134,61,92,353" />
          </Group>
          <Group>
            <GroupLegend>{"垂直方向间距(mm)=>间距*个数,间距,间距*个数,间距,..."}</GroupLegend>
            <GridInput readOnly defaultValue="143,57,86,211,350,217,201" />
          </Group>
          <DlgButtons>
            <XpButton>确定</XpButton>
            <XpButton>取消</XpButton>
          </DlgButtons>
        </DlgBody>
      </Dialog>
    </Root>
  );
}
